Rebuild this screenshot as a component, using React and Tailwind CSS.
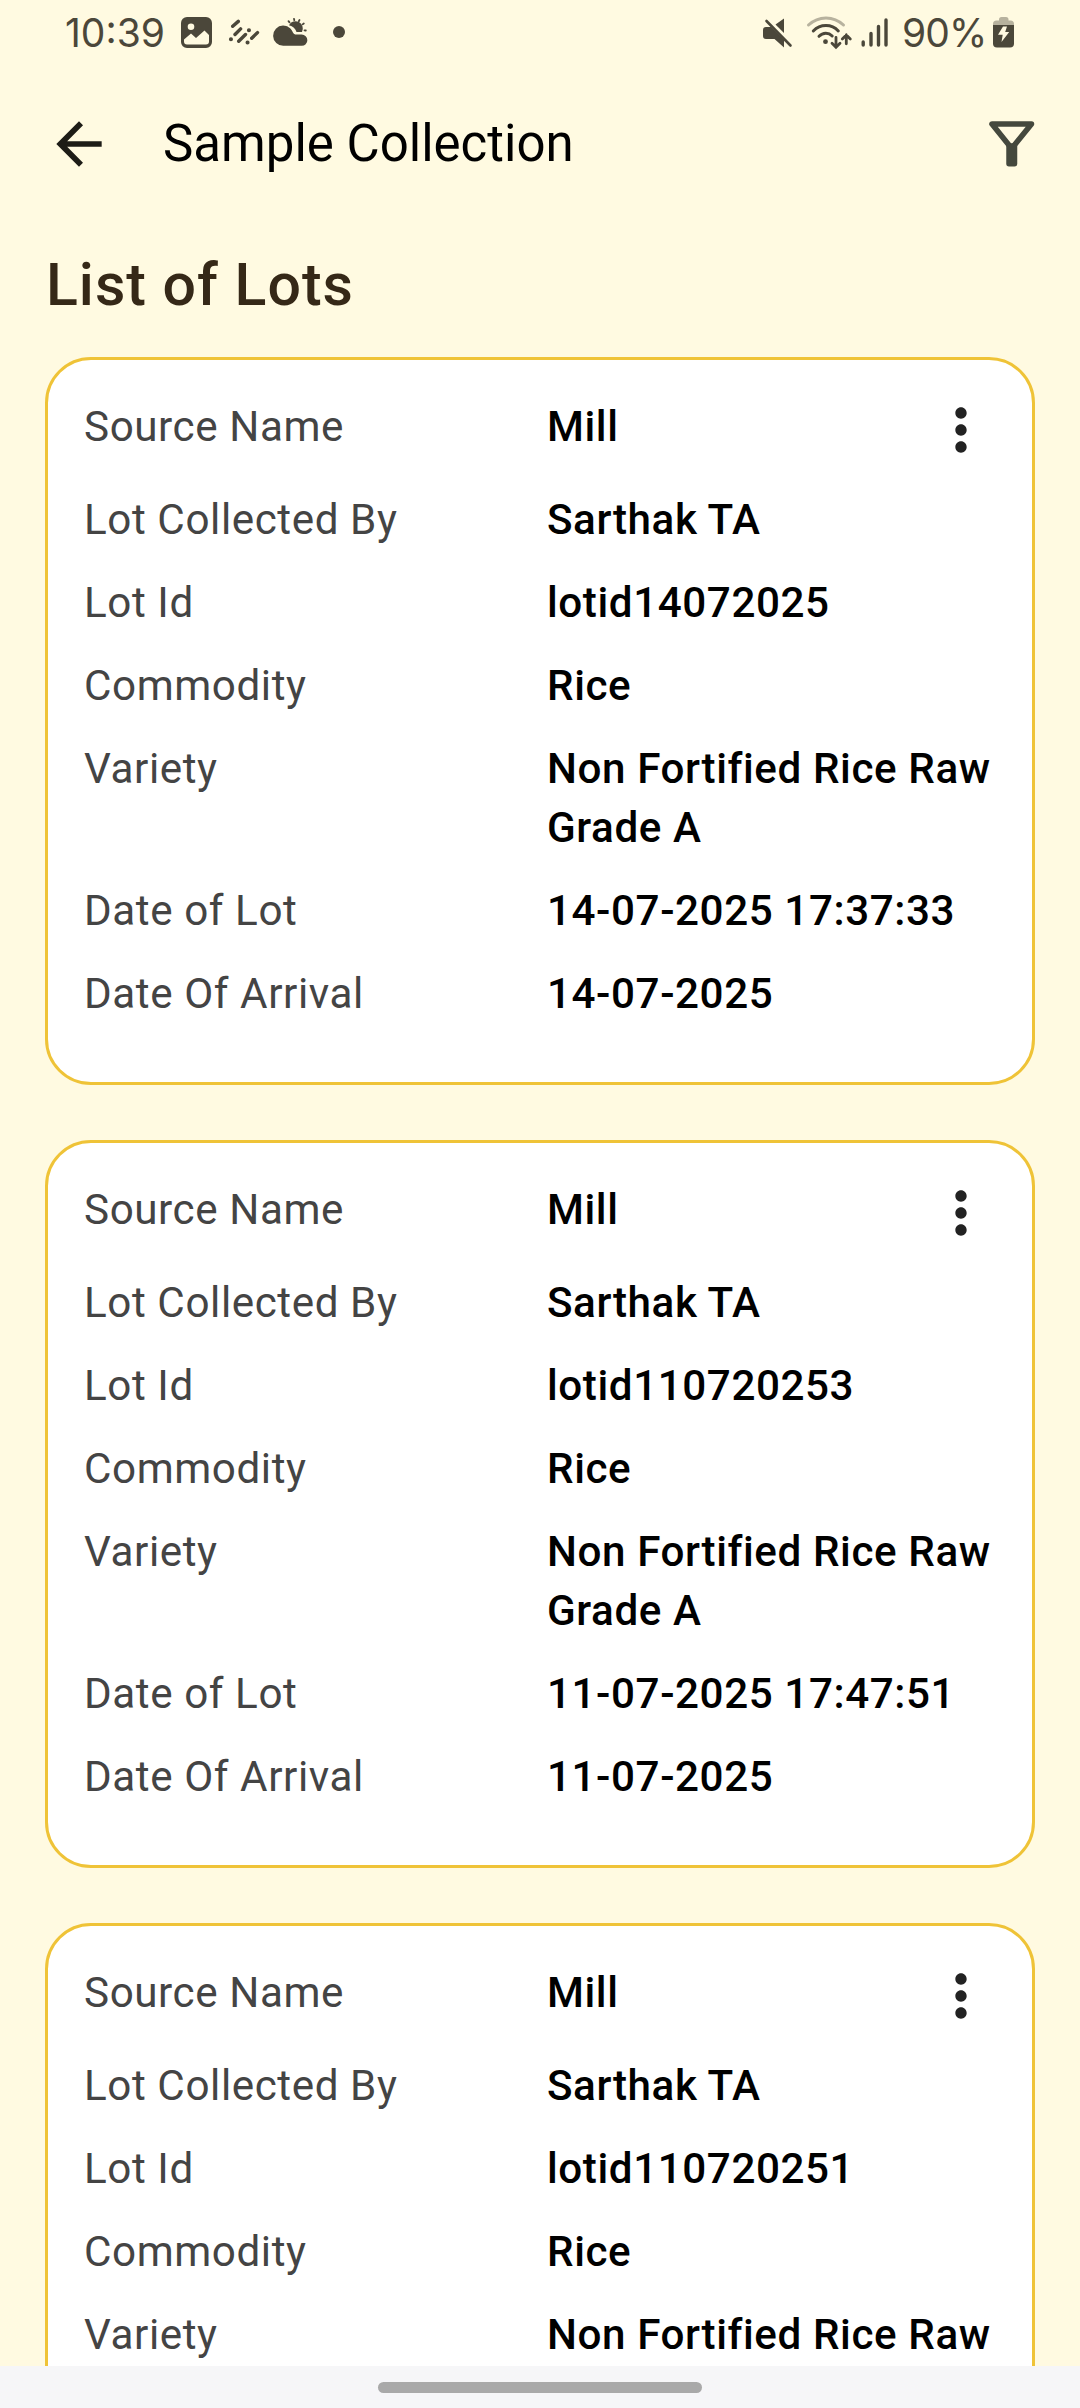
import React from 'react';
import { MdArrowBack, MdMoreVert } from 'react-icons/md';

const LOTS = [
  { source: 'Mill', collectedBy: 'Sarthak TA', lotId: 'lotid14072025', commodity: 'Rice', variety: 'Non Fortified Rice Raw Grade A', dateOfLot: '14-07-2025 17:37:33', dateOfArrival: '14-07-2025' },
  { source: 'Mill', collectedBy: 'Sarthak TA', lotId: 'lotid110720253', commodity: 'Rice', variety: 'Non Fortified Rice Raw Grade A', dateOfLot: '11-07-2025 17:47:51', dateOfArrival: '11-07-2025' },
  { source: 'Mill', collectedBy: 'Sarthak TA', lotId: 'lotid110720251', commodity: 'Rice', variety: 'Non Fortified Rice Raw' },
];

// Notification icons: gallery, stripes, weather, more dot
function NotificationIcons() {
  return (
    <svg width="170" height="64" viewBox="180 0 170 64" fill="currentColor">
      <path fillRule="evenodd" d="M187 17h19a6 6 0 0 1 6 6v19a6 6 0 0 1-6 6h-19a6 6 0 0 1-6-6V23a6 6 0 0 1 6-6ZM191 23.5a3.3 3.3 0 1 0 0 6.6 3.3 3.3 0 0 0 0-6.6ZM184 39.5v2a3 3 0 0 0 3 3h19a3 3 0 0 0 3-3V35l-4.500-4.500L196 38l-5-4.500Z" />
      <g stroke="currentColor" strokeWidth="3.4" strokeLinecap="round">
        <path d="M232.700 26.300l5.600-4.900M235 34.500l5.600-5.600M238.700 41.300l6.800-6.800M251.700 38.200l5.800-5.600" />
        <path d="M230.900 39.200h.1M248.900 30.200h.1M247.500 42.500h.1" strokeWidth="4" />
      </g>
      <path d="M283 25.500c4.500 0 8.200 2.800 9.800 6.700.7 1.700 2 2.300 3.700 2.300h5.200a5.600 5.600 0 0 1 0 11.300H283.500a10.100 10.100 0 0 1-.5-20.300Z" />
      <path d="M289 25.200a7.200 7.200 0 1 1 13 6.800h-5.500c-1-3.200-3.500-5.800-7.500-6.800Z" />
      <path d="M288.500 21.200l1 1.200M294 18.800l.3 1.400M299.500 20l-.7 1.300M303.800 23.500l-1.200.9M305.800 30.500l-1.300-.2" stroke="currentColor" strokeWidth="1.800" strokeLinecap="round" />
      <circle cx="339" cy="32" r="6" />
    </svg>
  );
}

// Muted, wifi with traffic arrows, signal bars
function SystemIcons() {
  return (
    <svg width="130" height="64" viewBox="762 0 130 64" fill="currentColor">
      <path d="M776.500 24.500l8.500-6v14.500ZM767 27h5l13 13v7.500l-9.500-8.500H767a3 3 0 0 1-3-3V30a3 3 0 0 1 3-3Z" />
      <path d="M767.500 21l24 24.500" stroke="currentColor" strokeWidth="2.600" strokeLinecap="round" />
      <g fill="none" stroke="currentColor" strokeLinecap="round" strokeWidth="3">
        <path d="M809.500 25c10-9.500 25-9.500 35 0" opacity=".4" />
        <path d="M814.300 31c7-7.300 18.400-7.300 25 0M820 36.300c4-4 9.500-4 13.200-.3" />
        <path d="M837 37.500v9.500M833 43.200l4 4 4-4M847.300 43.800v-8.800M843.300 39l4-4 4 4" strokeWidth="2.800" />
        <path d="M864.200 42v3M872 33.500v11.500M879.500 26.500v18.500M887 20v25" strokeWidth="3.400" />
      </g>
      <circle cx="826.500" cy="41.700" r="2.400" />
    </svg>
  );
}

function BatteryIcon() {
  return (
    <svg width="22" height="64" viewBox="994 0 22 64" fill="currentColor">
      <path d="M1000 20.500v-1a2.500 2.500 0 0 1 2.500-2.500h4.500a2.500 2.500 0 0 1 2.500 2.500v1h2a3.500 3.500 0 0 1 3.500 3.500v1.500h-21V24a3.500 3.500 0 0 1 3.500-3.500Z" opacity=".4" />
      <path d="M994 25h21v18.500a4 4 0 0 1-4 4h-13a4 4 0 0 1-4-4Z" />
      <path d="M1004 26.500h4l-1.800 5.500h4l-7.700 10 1.200-7.300H999Z" fill="#fff9e1" />
    </svg>
  );
}

function StatusBar() {
  return (
    <div className="h-16 shrink-0 flex items-start justify-between pl-[65px] pr-[65px] text-[#4b473a] font-['Inter',sans-serif]">
      <div className="flex">
        <span className="w-[115px] text-[39px] leading-[65px] font-normal whitespace-nowrap">10:39</span>
        <NotificationIcons />
      </div>
      <div className="flex">
        <SystemIcons />
        <span className="ml-[11px] w-[91px] text-[39px] leading-[65px] font-normal tracking-[-0.9px] whitespace-nowrap">90%</span>
        <BatteryIcon />
      </div>
    </div>
  );
}

function FilterIcon() {
  return (
    <svg width="46" height="46" viewBox="0 0 46 46" fill="none" stroke="#44483d" strokeLinejoin="round">
      <path d="M3 3h39.500L22.700 27.500Z" strokeWidth="5.500" />
      <path d="M20 25v17.700h5.500V25Z" strokeWidth="5.500" fill="#44483d" />
    </svg>
  );
}

function Row({ label, value, children }) {
  return (
    <div className="flex items-start">
      <span className="w-[463px] shrink-0 text-[#444444]">{label}</span>
      <span className="flex-1 font-medium text-black">{value}</span>
      {children}
    </div>
  );
}

function LotCard({ lot }) {
  return (
    <div className="h-[728px] shrink-0 bg-white border-3 border-[#efc337] rounded-[46px] pt-[37px] pl-[36px] pr-[32px] flex flex-col gap-6 text-[42.2px] leading-[59px] tracking-[0.58px]">
      <div className="h-[69px]">
        <Row label="Source Name" value={lot.source}>
          <MdMoreVert className="w-[68px] h-[68px] mr-[5px] -mt-px shrink-0 text-[#222222]" />
        </Row>
      </div>
      <Row label="Lot Collected By" value={lot.collectedBy} />
      <Row label="Lot Id" value={lot.lotId} />
      <Row label="Commodity" value={lot.commodity} />
      <Row label="Variety" value={lot.variety} />
      {lot.dateOfLot && <Row label="Date of Lot" value={lot.dateOfLot} />}
      {lot.dateOfArrival && <Row label="Date Of Arrival" value={lot.dateOfArrival} />}
    </div>
  );
}

export default function App() {
  return (
    <div className="w-[1080px] h-[2408px] overflow-hidden flex flex-col bg-[#fffae1] font-['Roboto',sans-serif]">
      <StatusBar />

      {/* App bar */}
      <div className="h-[160px] shrink-0 flex items-center pl-[45px] pr-[45px]">
        <MdArrowBack className="w-[68px] h-[68px] text-[#1d1c16]" />
        <h1 className="ml-[50px] flex-1 text-[51px] leading-[60px] text-black">Sample Collection</h1>
        <FilterIcon />
      </div>

      <div className="flex-1 min-h-0 overflow-hidden px-[45px]">
        <h2 className="mt-[21px] h-[112px] pl-px text-[59px] leading-[80px] font-medium tracking-[1px] text-[#352817]">List of Lots</h2>
        <div className="flex flex-col gap-[55px]">
          {LOTS.map((lot) => (
            <LotCard key={lot.lotId} lot={lot} />
          ))}
        </div>
      </div>

      {/* Gesture bar */}
      <div className="h-[42px] shrink-0 bg-[#f6f6f8] flex justify-center pt-4">
        <div className="w-[324px] h-[11px] rounded-full bg-[#a9a9a9]" />
      </div>
    </div>
  );
}
